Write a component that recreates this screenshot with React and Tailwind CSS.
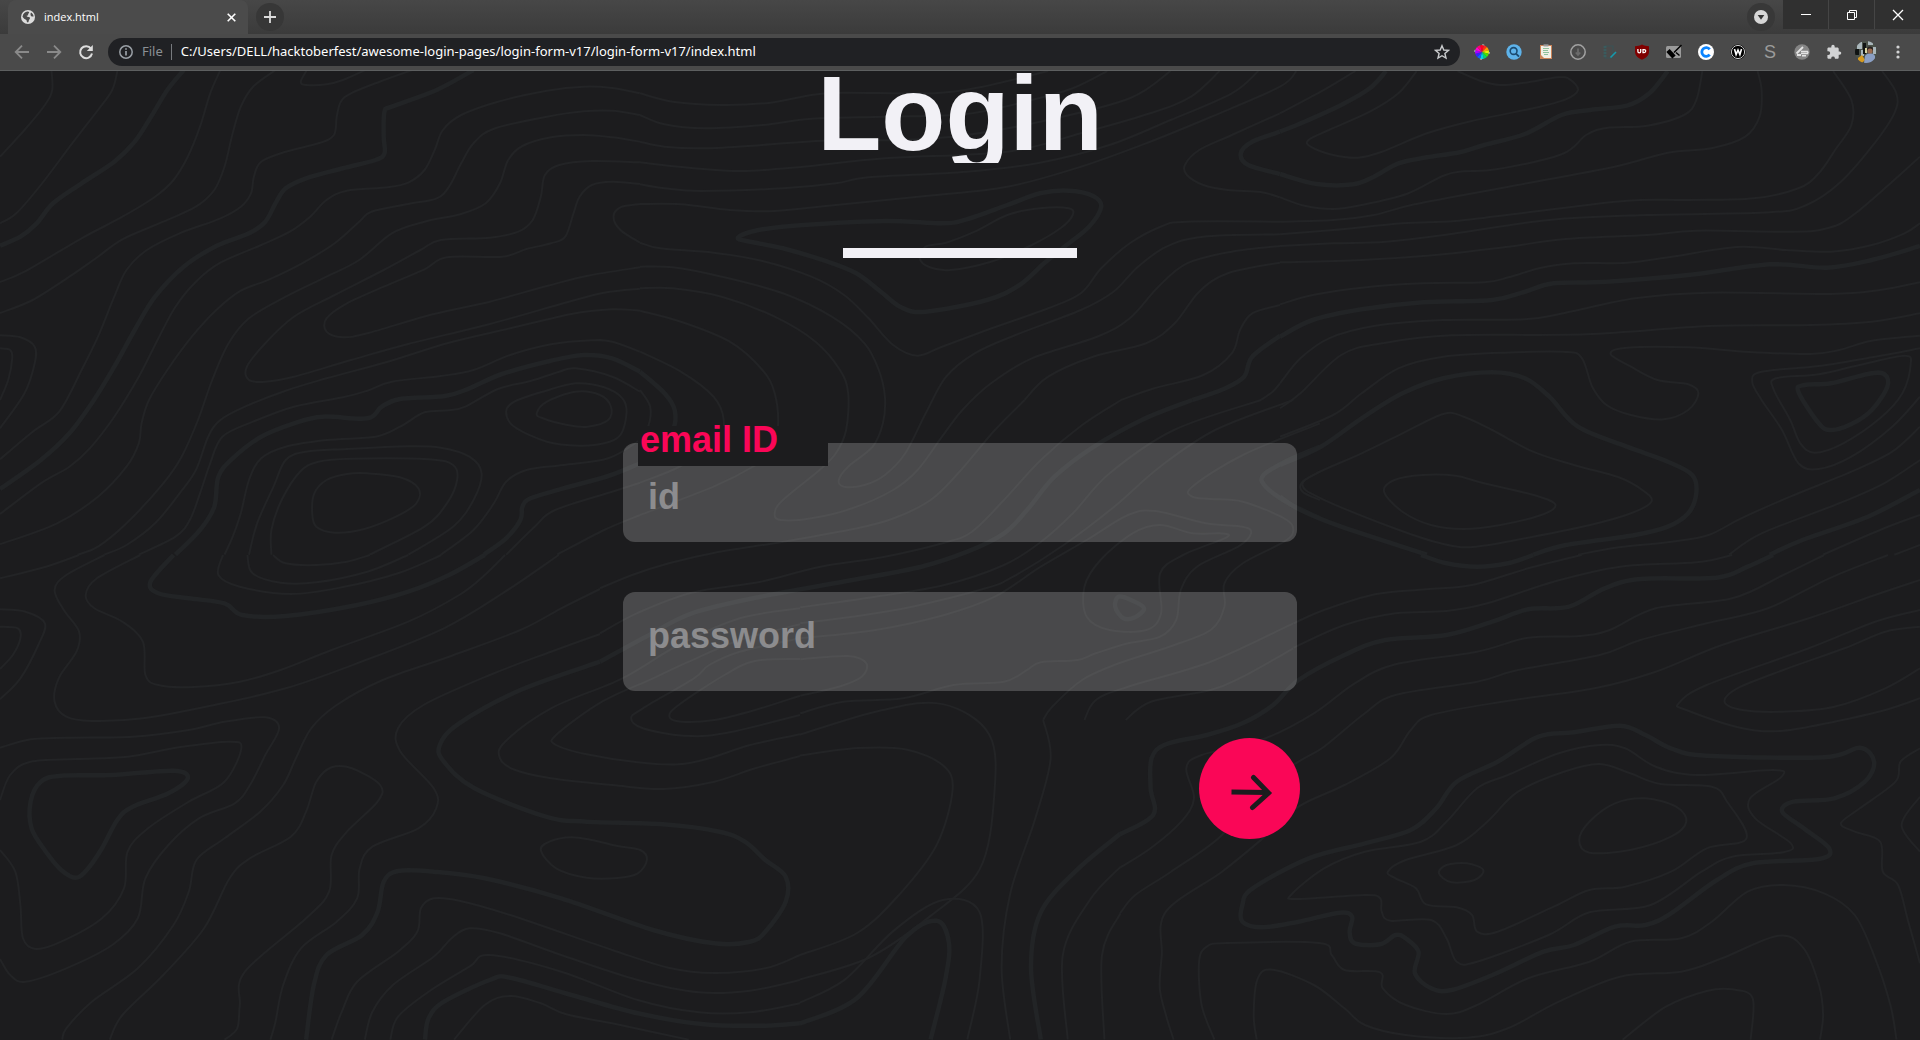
import React from "react";

/* Contour lines of the page background. Each sheet has its own grid:
   x, y is its corner on the page, sx and sy are grid units per pixel.
   A line is a list of x,y pairs; k = thick, z = closed. */
const SHEETS = [
  {
    x: 0, y: -1, sx: 2.45, sy: 3,
    lines: [
      ["", "126,0 128,60 110,105 60,180 0,260"],
      ["", "288,0 275,60 240,120 180,215 100,345 40,430 0,460"],
      ["k", "450,0 410,60 370,140 330,215 280,275 200,340 130,400 90,460 50,500 0,527"],
      ["", "540,0 515,70 490,170 460,260 425,330 380,380 300,440 200,505 60,605 0,636"],
      ["", "675,0 620,50 590,110 570,190 550,290 525,360 480,410 400,455 300,508 240,560 170,620 80,690 0,729"],
      ["", "752,0 737,35 750,45 800,43 840,30 895,0"],
      ["", "1010,0 930,35 860,70 835,95 825,140 818,195 780,220 700,245 640,275 622,320 615,370 590,410 540,445 440,490 360,540 310,600 280,680 240,800 200,900 145,1025 80,1085 0,1168"],
      ["k", "1160,0 1070,60 960,110 942,125 940,200 942,250 920,270 840,295 750,325 700,355 675,400 650,455 610,490 530,528 450,590 380,680 330,780 280,890 230,990 170,1090 100,1170 0,1257"],
      ["", "1568,70 1500,54 1430,50 1340,62 1220,95 1130,135 1085,180 1065,240 1040,300 1000,338 950,352 850,362 800,390 760,440 710,485 640,525 540,578 480,635 430,710 390,800 340,920 280,1040 220,1135 170,1190 100,1240 0,1332"],
      ["", "1568,135 1500,122 1430,124 1340,140 1210,176 1160,220 1130,280 1100,350 1070,385 1000,402 910,425 880,455 820,520 740,580 660,628 590,662 530,720 470,800 410,900 365,990 347,1060 340,1120 310,1190 240,1280 140,1360 0,1423"],
      ["", "1568,215 1500,202 1430,195 1350,202 1280,228 1245,270 1225,340 1190,400 1130,432 1040,455 960,490 880,570 800,620 700,680 610,745 560,820 520,930 485,1050 445,1160 400,1240 310,1360 240,1430 190,1454"],
      ["", "1568,277 1450,273 1370,285 1335,315 1325,380 1305,450 1270,485 1200,503 1080,510 1030,540 940,600 820,675 720,740 650,820 605,890 610,930 650,935 720,920 860,870 1000,822 1200,762 1380,700 1480,668 1568,656"],
      ["", "1568,342 1500,335 1450,345 1420,380 1405,430 1385,500 1350,520 1290,537 1230,560 1095,562 1040,598 940,650 850,700 800,745 800,785 840,802 900,790 1060,733 1200,695 1340,648 1440,617 1568,592"],
      ["", "1568,402 1520,412 1503,440 1520,480 1568,518"],
      ["", "1568,722 1500,718 1400,732 1250,775 1100,818 950,875 800,925 700,962 600,1010 540,1050 510,1100 480,1200 440,1270 380,1360 310,1425 255,1454"],
      ["", "1568,845 1500,815 1450,811 1350,823 1250,855 1160,900 1080,918 960,935 900,962 840,982 720,1010 620,1055 545,1100 515,1180 490,1270 465,1350 430,1400 340,1454"],
      ["k", "1568,905 1500,865 1430,855 1350,872 1230,912 1150,955 1090,978 980,987 935,1010 900,1045 790,1040 720,1060 640,1100 570,1165 535,1220 525,1310 490,1380 430,1454"],
      ["", "1568,965 1500,920 1410,895 1370,905 1300,933 1220,957 1140,1010 1100,1021 1040,1027 980,1070 920,1100 800,1110 700,1130 640,1165 610,1230 590,1330 570,1400 550,1454"],
      ["", "610,1454 630,1360 670,1250 700,1170 750,1145 850,1137 1000,1129 1080,1133 1150,1160 1180,1210 1160,1290 1110,1370 1000,1454"],
      ["", "665,1454 665,1380 690,1290 735,1205 780,1175 860,1166 1050,1168 1110,1185 1120,1230 1095,1300 1040,1370 905,1454"],
      ["z", "765,1330 770,1270 800,1230 850,1212 900,1210 980,1222 1025,1255 1020,1300 970,1340 890,1378 820,1388 775,1370"],
      ["z", "1240,1025 1260,995 1330,965 1410,940 1480,952 1525,985 1535,1030 1520,1095 1480,1120 1420,1127 1340,1115 1260,1070"],
      ["z", "1315,1030 1340,995 1410,965 1470,975 1497,1010 1490,1050 1440,1070 1390,1065 1330,1045"],
      ["", "1568,1110 1490,1165 1380,1185 1290,1200 1240,1235 1210,1300 1160,1380 1080,1454"],
      ["k", "1568,1180 1490,1218 1380,1255 1300,1285 1280,1310 1275,1350 1240,1405 1185,1454"],
      ["", "1568,1238 1500,1265 1360,1320 1310,1370 1240,1454"],
      ["", "1568,1335 1480,1380 1365,1454"],
      ["", "0,796 50,802 85,830 85,880 60,970 0,1075"],
      ["", "0,835 25,840 30,865 20,930 0,990"],
    ],
  },
  {
    x: 640, y: -1, sx: 2.45, sy: 3,
    lines: [
      ["", "0,70 80,95 200,105 320,98 420,75 500,68 720,70 840,50 1000,3"],
      ["", "0,135 60,163 160,175 300,165 420,146 600,140 800,132 960,90 1060,55 1145,3"],
      ["", "0,215 60,230 160,235 300,225 450,212 640,210 800,195 1000,150 1200,85 1300,3"],
      ["", "0,277 120,293 250,303 400,290 600,265 900,245 1080,190 1250,130 1350,80 1420,3"],
      ["", "0,343 60,355 150,363 350,355 480,340 560,322 800,305 980,278 1150,225 1300,150 1450,70 1515,3"],
      ["", "0,402 100,403 220,420 330,423 480,405 700,378 900,350 1080,290 1250,215 1400,140 1568,50 1608,3"],
      ["k", "1568,185 1500,215 1472,250 1490,285 1568,312"],
      ["", "1568,130 1450,195 1370,240 1335,285 1340,315 1380,345 1440,360 1520,366 1568,382"],
      ["kz", "240,503 290,480 400,465 600,453 740,460 800,448 900,405 980,370 1050,362 1110,378 1130,410 1100,470 1040,530 990,580 930,645 850,690 700,725 640,712 590,665 530,610 460,575 350,535 270,515"],
      ["z", "685,565 700,530 750,518 820,485 900,435 980,415 1050,415 1060,435 1030,475 960,525 860,575 760,600 710,592"],
      ["", "0,518 50,535 180,548 300,573 420,620 500,675 560,745 620,825 680,857 740,830 850,780 1000,715 1080,670 1130,595 1200,520 1280,468 1340,455 1568,455"],
      ["", "0,590 80,592 200,620 350,670 470,740 550,820 585,900 600,980 595,1060 570,1130 510,1190 487,1230 500,1250 550,1245 600,1215 650,1150 700,1030 750,920 820,850 920,795 1080,720 1160,665 1220,590 1290,530 1380,500 1568,493"],
      ["", "0,655 80,655 200,680 330,740 430,815 490,900 510,970 505,1080 480,1150 440,1200 350,1290 330,1330 345,1350 420,1345 520,1315 620,1260 680,1200 740,1100 790,1020 860,940 960,865 1120,800 1200,745 1270,650 1340,580 1450,545 1568,528"],
      ["", "0,722 100,755 220,815 300,900 330,970 338,1070 320,1150 280,1188 180,1250 0,1335"],
      ["", "0,845 100,905 180,980 205,1050 190,1110 100,1188 0,1238"],
      ["k", "0,905 60,970 85,1020 80,1080 40,1130 0,1180"],
      ["", "0,960 25,1010 20,1070 0,1110"],
      ["", "1568,578 1440,610 1370,665 1310,760 1240,820 1110,860 1000,920 942,990"],
      ["", "1568,705 1500,730 1470,780 1450,850 1380,915 1260,955 1178,990"],
      ["k", "1568,797 1500,860 1480,920 1430,957 1353,990"],
      ["", "1568,940 1550,965 1521,990"],
    ],
  },
  {
    x: 600, y: 329, sx: 2.178, sy: 3,
    lines: [
      ["", "925,0 860,90 780,220 720,300 640,355 560,385 400,425 250,458 150,490 70,525 0,565"],
      ["", "1135,0 1050,75 960,180 880,300 810,395 750,428 620,470 480,500 350,545 200,578 80,640 0,700"],
      ["k", "1290,0 1180,60 1070,145 990,230 930,330 880,400 800,455 700,500 550,540 350,590 200,640 100,710 0,785"],
      ["", "1440,0 1250,90 1110,220 1030,340 960,426 880,495 750,555 600,590 436,622"],
      ["", "1510,0 1340,90 1220,200 1120,320 1010,435 900,530 840,565 680,620 550,650 436,670"],
      ["", "1568,70 1400,165 1290,260 1290,290 1330,297 1400,305 1490,355 1510,390 1490,425 1400,490 1360,550 1360,620 1330,690 1240,740 1130,790 1050,840 985,920 965,960"],
      ["", "436,715 600,690 750,645 860,590 960,500 1060,420 1150,345 1210,333 1320,370 1400,380 1418,400 1390,440 1300,500 1265,570 1255,660 1220,710 1150,730 1080,760 1040,780 960,787 930,810 880,845 770,855 660,895 530,905 436,940"],
      ["z", "1160,400 1220,375 1290,400 1350,400 1365,412 1270,465 1220,520 1222,640 1190,690 1110,690 1060,650 1055,560 1090,480"],
      ["kz", "1122,620 1130,590 1160,602 1185,625 1165,652 1140,655"],
      ["k", "1568,140 1500,180 1445,225 1450,260 1500,310 1568,355"],
      ["", "1568,215 1530,245 1530,275 1568,300"],
      ["", "436,778 540,768 580,790 570,830 520,860 436,887"],
      ["", "1510,670 1330,785 1150,860 1080,900 1055,960"],
      ["", "1510,745 1400,830 1330,870 1200,905 1145,960"],
    ],
  },
  {
    x: 1280, y: -1, sx: 2.45, sy: 3,
    lines: [
      ["", "0,130 100,65 185,3"],
      ["k", "0,185 60,155 150,105 220,55 260,3"],
      ["", "335,3 290,70 220,125 120,180 70,210 75,230 130,255 190,263 250,245 360,190 470,153 620,115 700,88 730,60 710,28 680,22 600,38 540,45 490,32 435,3"],
      ["k", "0,312 90,342 180,343 230,320 290,280 360,262 440,247 500,225 600,192 690,135 760,120 850,107 905,70 950,3"],
      ["", "0,382 60,407 130,417 200,405 310,372 400,317 450,304 530,298 690,253 750,195 800,174 900,167 990,135 1020,90 1035,3"],
      ["", "0,455 130,450 230,435 330,403 560,350 820,290 950,248 1060,234 1140,200 1175,140 1180,60 1170,3"],
      ["", "0,493 130,480 300,460 430,453 600,428 850,392 1000,390 1160,385 1270,355 1320,310 1360,240 1400,165 1400,90 1355,3"],
      ["", "0,528 130,520 260,515 420,492 660,450 900,435 1200,427 1290,405 1370,340 1450,230 1505,130 1510,70 1475,3"],
      ["", "0,577 200,570 400,553 560,530 700,507 900,495 1020,482 1250,485 1340,475 1410,430 1568,260"],
      ["", "0,703 80,675 200,653 350,640 500,637 560,622 640,593 720,580 850,578 960,560 1120,531 1240,540 1350,545 1450,525 1530,490 1568,460"],
      ["k", "0,800 80,750 200,718 350,697 520,690 600,665 670,640 800,635 1000,615 1200,583 1340,593 1450,570 1568,528"],
      ["", "0,940 50,865 120,805 230,768 400,750 600,748 700,728 870,685 1050,668 1350,672 1470,660 1568,637"],
      ["", "0,1015 50,970 150,855 250,820 420,796 750,793 1050,768 1300,765 1450,755 1568,730"],
      ["", "0,1100 130,1035 200,970 290,895 400,860 550,848 700,846 740,865 765,950 800,1005 860,1035 940,1048 1000,1020 1025,970 1000,943 925,930 860,890 810,852 850,833 1000,832 1150,846 1300,852 1370,840 1450,812 1568,797"],
      ["k", "0,1185 100,1130 200,1045 300,970 400,925 520,907 600,925 660,980 730,1070 850,1130 950,1175 1010,1215 1020,1270 1000,1330 950,1370 870,1395 700,1425 620,1454"],
      ["k", "0,1280 50,1320 150,1370 360,1454"],
      ["z", "55,1245 90,1210 200,1150 300,1090 400,1032 450,1040 520,1080 620,1145 720,1185 830,1222 890,1262 910,1295 860,1330 760,1365 620,1400 480,1430 400,1422 280,1375 100,1285"],
      ["z", "255,1265 280,1230 350,1215 430,1217 500,1240 630,1278 675,1305 640,1335 540,1365 450,1377 370,1365 300,1325"],
      ["", "1568,980 1500,1070 1400,1160 1320,1197 1270,1180 1230,1080 1180,990 1157,935 1180,905 1320,888 1450,862 1568,835"],
      ["z", "1215,925 1320,913 1420,885 1530,857 1545,885 1525,970 1470,1045 1380,1120 1310,1148 1275,1120 1250,1050 1210,960"],
      ["kz", "1270,965 1285,945 1350,940 1440,912 1480,912 1488,950 1450,1020 1400,1062 1350,1080 1320,1060"],
      ["", "1568,1070 1500,1145 1400,1205 1250,1280 1130,1345 1050,1395 960,1415 830,1432 730,1454"],
      ["", "1568,1170 1480,1240 1370,1300 1180,1390 1100,1454"],
      ["k", "1568,1260 1440,1340 1280,1410 1200,1454"],
      ["", "1568,1335 1480,1375 1330,1454"],
      ["", "1568,1425 1505,1454"],
    ],
  },
  {
    x: 0, y: 484, sx: 1.96, sy: 3,
    lines: [
      ["", "0,70 90,35 155,0"],
      ["", "205,0 130,60 107,105 125,165 155,230 150,290 115,370 107,440 130,485 180,498 280,490 420,450 560,400 700,325 870,220 990,110 1095,0"],
      ["", "275,0 190,70 168,120 185,160 240,200 280,260 285,360 310,390 380,396 470,380 550,345 650,285 800,200 900,120 950,60 990,0"],
      ["k", "340,0 295,80 310,115 370,130 440,145 475,180 560,183 700,150 800,110 880,60 950,0"],
      ["", "437,0 428,60 470,95 570,117 670,97 780,55 865,0"],
      ["", "485,0 495,55 550,83 620,82 720,50 800,0"],
      ["", "535,0 560,25 620,30 680,20 725,0"],
      ["", "0,163 50,170 88,205 75,270 40,370 0,433"],
      ["", "0,215 35,220 40,250 25,300 0,342"],
      ["", "1176,102 1100,160 1020,225 880,305 750,375 660,450 610,520 580,610 555,690 510,770 440,850 385,915 370,1010 340,1110 270,1240 180,1340 130,1420 122,1454"],
      ["", "0,578 60,553 130,548 260,545 370,525 440,500 520,487 547,520 520,600 490,690 460,745 390,790 330,870 285,970 270,1090 220,1170 130,1240 50,1280 20,1260 0,1212"],
      ["", "0,735 20,660 60,620 150,612 250,605 350,577 450,560 473,580 440,680 370,740 290,820 250,890 243,1000 200,1090 120,1160 70,1182 45,1150 40,1050 30,950 0,885"],
      ["kz", "60,740 80,680 120,662 220,660 340,647 368,670 330,715 260,755 230,795 200,880 170,945 148,968 120,945 90,890 62,820"],
      ["", "215,1454 240,1380 320,1260 400,1120 450,970 490,910 570,845 600,770 620,680 650,637 690,640 745,690 740,740 680,830 650,900 645,1010 600,1090 480,1250 470,1350 465,1420 440,1454"],
      ["", "1176,237 1080,290 960,360 830,450 780,520 785,590 850,700 855,760 820,820 730,875 705,940 700,1030 660,1100 590,1180 555,1290 540,1400 530,1454"],
      ["k", "1176,320 1020,405 900,505 862,570 870,620 930,700 1070,785 1150,800 1300,808 1410,830 1460,860 1500,915 1540,965 1540,1040 1500,1130 1470,1160 1400,1165 1280,1125 1100,1030 950,970 850,950 780,948 752,980 740,1070 710,1140 640,1200 615,1290 600,1454"],
      ["", "1568,160 1450,190 1330,270 1220,370 1080,460 990,560 980,610 1010,645 1080,670 1200,690 1300,702 1400,680 1480,640 1568,603"],
      ["", "1568,208 1450,255 1350,320 1280,370 1180,440 1090,540 1090,570 1150,598 1250,622 1330,628 1390,610 1470,570 1568,538"],
      ["", "1568,250 1450,290 1390,330 1360,370 1260,460 1237,490 1260,520 1340,542 1420,535 1568,480"],
      ["", "1568,312 1480,318 1420,360 1330,450 1312,485 1335,500 1400,495 1480,465 1568,422"],
      ["z", "1060,885 1080,858 1120,847 1160,855 1210,873 1255,885 1268,915 1250,955 1210,969 1150,968 1090,940"],
      ["", "1568,1200 1500,1240 1400,1254 1310,1238 1200,1185 1000,1080 900,1037 850,1030 825,1060 818,1130 780,1190 700,1280 670,1370 650,1454"],
      ["", "1568,1275 1470,1307 1370,1312 1250,1275 1100,1200 980,1135 920,1120 885,1150 850,1205 770,1290 730,1370 715,1454"],
      ["", "1568,1345 1470,1372 1370,1372 1250,1335 1100,1250 960,1200 920,1235 840,1310 780,1385 765,1454"],
      ["k", "1568,1405 1500,1412 1380,1408 1250,1375 1120,1320 1000,1268 960,1275 870,1340 840,1390 833,1454"],
      ["", "890,1454 950,1350 1000,1323 1060,1345 1110,1378 1200,1405 1350,1454"],
    ],
  },
  {
    x: 0, y: -71, sx: 0.8167, sy: 0.8167,
    lines: [
      ["", "653,617 700,611 740,612 770,625 778,645 765,690 735,730 700,762 653,780"],
      ["", "653,600 720,580 770,575 808,600 812,650 800,710 760,748 710,782 653,800"],
      ["k", "653,836 700,815 740,765 765,752 775,770 772,800 760,849"],
      ["", "653,819 690,800 730,760 770,735 800,745 800,800 790,849"],
      ["", "852,588 858,620 845,670 825,730 818,790 825,849"],
      ["k", "915,681 880,710 850,745 842,790 850,849"],
      ["", "915,708 890,735 868,780 872,849"],
      ["", "915,746 900,780 902,849"],
    ],
  },
  {
    x: 1120, y: 484, sx: 1.96, sy: 3,
    lines: [
      ["", "905,0 800,40 690,90 600,103 500,118 400,165 340,205"],
      ["", "1200,0 1130,22 980,35 850,80 720,145 640,168 540,175 440,210 340,278"],
      ["k", "590,0 640,25 700,35 760,25 810,0"],
      ["k", "1280,0 1230,35 1170,68 1020,72 950,100 880,155 800,163 730,200 640,240 520,255 440,300 350,375 300,450 240,505 170,540 90,568 62,610 60,700 65,780 0,838"],
      ["", "1380,0 1300,60 1200,130 1050,160 960,225 900,243 800,248 700,290 540,328 460,385 380,475 280,553 160,600 130,640 145,730 120,800 60,880 0,938"],
      ["", "1505,0 1390,70 1270,160 1150,205 1020,255 940,300 780,345 700,380 540,420 480,475 400,575 350,620 250,720 200,840 100,950 30,1020 0,1075"],
      ["", "1568,75 1480,120 1350,190 1180,270 1050,350 930,400 750,440 610,480 570,525 530,610 440,690 350,755 280,850 200,950 90,1070 82,1200 78,1300 90,1380 105,1454"],
      ["", "1568,165 1480,200 1350,280 1150,390 1095,445 1110,465 1220,520 1300,527 1400,500 1500,465 1568,430"],
      ["", "1568,215 1500,230 1420,280 1300,345 1210,400 1185,440 1220,465 1300,470 1400,455 1500,400 1568,340"],
      ["kz", "240,1050 260,1000 370,910 480,865 570,825 620,760 660,680 740,620 820,545 890,532 980,512 1030,540 1080,580 1150,602 1380,607 1450,578 1478,620 1460,680 1400,730 1320,740 1298,770 1340,820 1390,880 1370,912 1240,925 1170,975 1080,1075 1030,1110 970,1115 890,1170 830,1190 730,1260 650,1305 610,1300 578,1255 585,1190 560,1150 540,1140 510,1168 460,1165 450,1130 455,1085 430,1073 350,1100 280,1117 240,1100"],
      ["z", "335,1020 400,940 480,890 590,860 640,800 700,700 760,660 860,595 940,570 990,580 1050,635 1130,660 1280,645 1297,665 1235,730 1245,790 1315,865 1300,892 1200,905 1140,950 1040,1050 920,1072 840,1140 700,1220 660,1220 640,1150 610,1095 530,1097 513,1070 510,1030 480,1020 350,1032"],
      ["z", "525,950 560,915 660,870 720,800 780,710 870,650 940,627 1000,655 1060,687 1160,695 1190,740 1228,850 1150,880 1080,950 990,995 920,1005 850,1055 740,1130 700,1130 690,1080 660,1057 600,1048 580,1000 540,970"],
      ["z", "900,855 920,800 970,745 1030,730 1090,755 1110,800 1080,845 1000,885 920,893"],
      ["z", "625,955 640,930 680,925 712,945 695,975 650,982"],
      ["", "185,1454 160,1350 155,1220 170,1175 210,1164 390,1164 415,1200 440,1245 510,1252 515,1300 560,1350 640,1377 700,1350 800,1270 920,1220 1000,1160 1100,1150 1160,1100 1230,1010 1300,990 1380,1015 1440,1080 1480,1210 1510,1350 1522,1454"],
      ["", "268,1454 262,1380 270,1270 300,1244 380,1290 440,1360 480,1410 560,1440 680,1448 760,1420 860,1340 980,1265 1100,1250 1180,1210 1290,1142 1340,1180 1370,1290 1378,1380 1372,1454"],
      ["", "985,1454 1070,1355 1150,1308 1200,1303 1240,1330 1236,1454"],
      ["", "1568,580 1530,620 1520,680 1450,760 1413,805 1440,830 1490,860 1495,950 1525,990 1545,1100 1568,1225"],
      ["", "1568,725 1532,810 1568,890"],
    ],
  },
];

/* Smooth curve through the points (Catmull-Rom as cubic Béziers). */
function curve(sheet, list, closed) {
  const p = list.split(" ").map((s) => {
    const [a, b] = s.split(",").map(Number);
    return [sheet.x + a / sheet.sx, sheet.y + b / sheet.sy];
  });
  const n = p.length;
  const at = (i) => (closed ? p[(i + n) % n] : p[Math.max(0, Math.min(n - 1, i))]);
  let d = `M${p[0][0].toFixed(1)} ${p[0][1].toFixed(1)}`;
  for (let i = 0; i < (closed ? n : n - 1); i++) {
    const a = at(i - 1), b = at(i), c = at(i + 1), e = at(i + 2);
    const v = [b[0] + (c[0] - a[0]) / 6, b[1] + (c[1] - a[1]) / 6, c[0] - (e[0] - b[0]) / 6, c[1] - (e[1] - b[1]) / 6, c[0], c[1]];
    d += "C" + v.map((t) => t.toFixed(1)).join(" ");
  }
  return closed ? d + "Z" : d;
}

function Contours() {
  return (
    <svg className="absolute inset-0 h-full w-full" viewBox="0 0 1920 969" preserveAspectRatio="xMidYMin slice" fill="none" aria-hidden="true">
      {SHEETS.flatMap((s, i) =>
        s.lines.map(([kind, pts], j) => (
          <path key={`${i}-${j}`} d={curve(s, pts, kind.includes("z"))} stroke={kind.includes("k") ? "#222426" : "#232426"} strokeWidth={kind.includes("k") ? 4.5 : 2} />
        ))
      )}
    </svg>
  );
}

function Ext({ label, children }) {
  return (
    <button aria-label={label} className="flex h-7 w-8 items-center justify-center">
      <svg className="size-4" viewBox="0 0 16 16" fill="none" aria-hidden="true">{children}</svg>
    </button>
  );
}

const WHEEL = ["#ff2a1a", "#ff9a00", "#e8f000", "#4be000", "#00d86a", "#00d0e8", "#0a62ff", "#3a1cff", "#a800ff", "#ff00d4", "#ff0070", "#ff0020"];

function Extensions() {
  return (
    <>
      <Ext label="Colour picker">
        {WHEEL.map((c, i) => {
          const a = ((i * 30 - 75) * Math.PI) / 180, b = a + Math.PI / 6;
          return <path key={c} fill={c} d={`M8 8L${8 + 7 * Math.cos(a)} ${8 + 7 * Math.sin(a)}A7 7 0 0 1 ${8 + 7 * Math.cos(b)} ${8 + 7 * Math.sin(b)}Z`} />;
        })}
        <circle cx="8" cy="8" r="7.3" stroke="#bbb" strokeWidth="1" strokeDasharray="2 9.5" />
      </Ext>
      <Ext label="Search tool">
        <circle cx="8" cy="8" r="7.7" fill="#5eb3ea" />
        <circle cx="7.6" cy="7" r="3.4" stroke="#1c4b70" strokeWidth="1.6" />
        <path d="M10 9.6l3 3" stroke="#1c4b70" strokeWidth="2" />
      </Ext>
      <Ext label="Clipboard">
        <path d="M2 1h12v14H2z" fill="#c98257" />
        <path d="M3 2h10v12H6l-3-3z" fill="#f1efe6" />
        <path d="M5.500 .3h5v2.200h-5z" fill="#999" />
        <path d="M5 4.500h6M5 6.500h5M5 8.500h6M6 10.500h4" stroke="#8fc19d" />
      </Ext>
      <Ext label="Downloader">
        <circle cx="8" cy="8" r="7.2" stroke="#a2a2a2" strokeWidth="1.5" />
        <path d="M8 4.500v6M5.800 8.500L8 11l2.200-2.500" stroke="#6b6b6b" strokeWidth="1.800" />
      </Ext>
      <Ext label="Notes">
        <path d="M3 2h8v12H3z" stroke="#3b5355" strokeWidth="1.2" />
        <path d="M1.500 3h3M1.500 6h3M1.500 9h3M1.500 12h3" stroke="#35686d" />
        <path d="M8.500 13.500L14 8" stroke="#159aad" strokeWidth="1.6" />
      </Ext>
      <Ext label="Shield">
        <path d="M8 .5c2 1.200 4.500 1.700 7 1.700v5.300c0 4-3 6.500-7 8.200-4-1.700-7-4.200-7-8.200V2.200C3.500 2.200 6 1.700 8 .500z" fill="#800000" />
        <path d="M3.900 5v2.400a1.400 1.400 0 0 0 2.800 0V5M9 5.600v3h1.200a1.500 1.500 0 0 0 0-3z" stroke="#fff" strokeWidth="1.300" />
      </Ext>
      <Ext label="Cleaner">
        <rect x="0" y="2" width="15" height="12" rx="1.500" fill="#9a9a9a" />
        <path d="M2 6.500l6 6.500" stroke="#000" strokeWidth="4.500" />
        <path d="M8 8.500L15.500 1M10 8.500l3.500 3" stroke="#000" strokeWidth="1.500" />
      </Ext>
      <Ext label="Clockify">
        <circle cx="8" cy="8" r="8" fill="#fff" />
        <path d="M11.700 5.300A4.400 4.400 0 1 0 11.700 10.700" stroke="#0a84ff" strokeWidth="2.800" />
      </Ext>
      <Ext label="Wiki">
        <circle cx="8" cy="8" r="7.500" fill="#000" />
        <circle cx="8" cy="8" r="6.600" stroke="#c9c9c9" strokeWidth="1" />
        <path d="M4.500 5l1.600 5.500L8 6l1.900 4.500L11.500 5" stroke="#fff" strokeWidth="1.600" />
      </Ext>
      <button aria-label="S extension" className="flex h-7 w-8 items-center justify-center font-['Liberation_Sans'] text-lg leading-none text-[#9b9b9b]">S</button>
      <Ext label="Highlighter">
        <circle cx="8" cy="8" r="7.700" fill="#858585" />
        <path d="M2.500 9.500L9 3M3 11h4" stroke="#e4e4e4" strokeWidth="1.800" />
        <path d="M7 7.500h6.500a1.500 1.500 0 0 1 0 2M7 9.500h7M8 11.800h4" stroke="#e4e4e4" strokeWidth="1.400" />
      </Ext>
      <Ext label="Extensions">
        <path d="M13.600 7.400h-.9V4.900c0-.8-.6-1.400-1.400-1.400H8.700v-1a1.700 1.700 0 0 0-3.400 0v1H2.700c-.8 0-1.300.6-1.300 1.400v2.300h.9a1.900 1.900 0 0 1 0 3.800h-.9v2.400c0 .8.600 1.400 1.400 1.400h2.400v-.9a1.900 1.900 0 0 1 3.700 0v.9h2.400c.8 0 1.400-.6 1.400-1.400v-2.600h.9a1.700 1.700 0 0 0 0-3.400z" fill="#d2d3d4" />
      </Ext>
      <button aria-label="Profile" className="flex h-7 w-8 items-center justify-center">
        <svg className="size-[22px]" viewBox="0 0 22 22" aria-hidden="true">
          <clipPath id="face"><circle cx="11" cy="11" r="11" /></clipPath>
          <g clipPath="url(#face)">
            <path fill="#4b524a" d="M0 0h22v22H0z" />
            <path fill="#a9b6bb" d="M2 1h5v7H2zM13 0h5v4h-5zM6 9h3v6H6zM18 6h3v7h-3z" />
            <path fill="#101312" d="M8 2h3v11H8zM0 8h4v6H0z" />
            <path fill="#d9d5a0" d="M10 7h2v5h-2z" />
            <path fill="#d69a1f" d="M3 17l4-3 3 5-3 3H3z" />
            <path fill="#8b9fc4" d="M10 15c2-3 8-4 10 0v7H9z" />
            <circle cx="15" cy="8.500" r="3" fill="#2b2320" />
            <circle cx="15" cy="10" r="2.600" fill="#9a6b50" />
          </g>
        </svg>
      </button>
      <button aria-label="Menu" className="flex h-7 w-8 items-center justify-center">
        <svg className="size-4" viewBox="0 0 16 16" fill="#d2d3d4" aria-hidden="true">
          <circle cx="8" cy="3" r="1.600" /><circle cx="8" cy="8" r="1.600" /><circle cx="8" cy="13" r="1.600" />
        </svg>
      </button>
    </>
  );
}

function WinButton({ label, children }) {
  return (
    <button aria-label={label} className="flex h-[29px] w-[45px] items-center justify-center bg-[#303030]">
      <svg className="size-3" viewBox="0 0 12 12" fill="none" stroke="#fff" aria-hidden="true">{children}</svg>
    </button>
  );
}

function Browser() {
  return (
    <header className="relative border-b border-[#5d5f60] bg-[#4a4a4a] font-['Open_Sans',sans-serif]">
      <div className="flex h-[34px] items-start justify-between bg-linear-to-b from-[#474747] to-[#3b3b3b] pl-2">
        <div className="flex items-center">
          <div className="flex h-[34px] w-60 items-center rounded-t-lg bg-[#4b4b4b] pr-[9px] pl-[13px]">
            <svg className="size-[14px]" viewBox="0 0 14 14" aria-hidden="true">
              <circle cx="7" cy="7" r="7" fill="#dcdcdc" />
              <path d="M6.500 1.500c2 0 2 1.500 1 2s.5 1.800-1.200 2C5 5.600 5.800 7 7.500 7s2 1.500 1 2.200-.4 2.300-1.500 3.300c-1.800-.3-.8-2.300-2-2.800S2.500 8.500 1.500 6.800C2 3.500 4 1.700 6.500 1.500zM10 2.500c1.500.8 2.500 2.300 2.600 4-1.600.3-2.800-.2-3-1.500S9.500 3.500 10 2.500z" fill="#4b4b4b" />
            </svg>
            <span className="ml-[9px] flex-1 text-[11px] text-white">index.html</span>
            <button aria-label="Close tab" className="flex size-4 items-center justify-center">
              <svg className="size-[9px]" viewBox="0 0 9 9" stroke="#fff" strokeWidth="1.600" aria-hidden="true"><path d="M.7.7l7.600 7.600M8.300.7L.7 8.300" /></svg>
            </button>
          </div>
          <button aria-label="New tab" className="ml-2 flex size-7 items-center justify-center rounded-full bg-[#373737]">
            <svg className="size-3" viewBox="0 0 12 12" stroke="#dcdcdc" strokeWidth="1.800" aria-hidden="true"><path d="M6 0v12M0 6h12" /></svg>
          </button>
        </div>
        <div className="flex items-start">
          <button aria-label="Search tabs" className="mt-[3px] mr-2 flex size-7 items-center justify-center rounded-full bg-[#383838]">
            <svg className="size-[14px]" viewBox="0 0 14 14" aria-hidden="true">
              <circle cx="7" cy="7" r="7" fill="#d6d6d6" /><path d="M3.700 5h6.600L7 9.700z" fill="#333" />
            </svg>
          </button>
          <div className="flex gap-px bg-[#454545]">
            <WinButton label="Minimize"><path d="M1 5.500h10" /></WinButton>
            <WinButton label="Restore"><path d="M1.500 3.500h7v7h-7zM3.500 3.500v-2h7v7h-2" /></WinButton>
            <WinButton label="Close"><path d="M1 1l10 10M11 1L1 11" strokeWidth="1.300" /></WinButton>
          </div>
        </div>
      </div>
      <div className="flex h-9 items-center pr-[6px] pl-[14px]">
        <button aria-label="Back" className="flex w-8 items-center text-[#8a8a8a]">
          <svg className="size-4" viewBox="0 0 16 16" fill="none" stroke="currentColor" strokeWidth="1.800" aria-hidden="true"><path d="M15 8H2M8 1.700L1.700 8 8 14.300" /></svg>
        </button>
        <button aria-label="Forward" className="flex w-8 items-center text-[#8a8a8a]">
          <svg className="size-4" viewBox="0 0 16 16" fill="none" stroke="currentColor" strokeWidth="1.800" aria-hidden="true"><path d="M1 8h13M8 1.700L14.300 8 8 14.300" /></svg>
        </button>
        <button aria-label="Reload" className="flex w-[30px] items-center text-[#dedede]">
          <svg className="size-4" viewBox="0 0 16 16" fill="none" aria-hidden="true">
            <path d="M13 4.600A6 6 0 1 0 14 9.500" stroke="currentColor" strokeWidth="2" /><path d="M14.800 1v6H8.800z" fill="currentColor" />
          </svg>
        </button>
        <div className="mr-[6px] flex h-7 flex-1 items-center rounded-full bg-[#202124] pr-[10px] pl-[11px] font-['Noto_Sans',sans-serif] text-[13px]">
          <svg className="size-[14px]" viewBox="0 0 14 14" fill="none" stroke="#9aa0a6" strokeWidth="1.500" aria-hidden="true"><circle cx="7" cy="7" r="6.200" /><path d="M7 6v4.500M7 3.200v1.600" strokeWidth="1.700" /></svg>
          <span className="ml-[9px] text-[#8b9095]">File</span>
          <span className="mr-[9px] ml-2 h-4 w-px bg-[#777a7e]" />
          <input aria-label="Address" className="min-w-0 flex-1 bg-transparent text-white outline-none" defaultValue="C:/Users/DELL/hacktoberfest/awesome-login-pages/login-form-v17/login-form-v17/index.html" />
          <button aria-label="Bookmark">
            <svg className="size-4" viewBox="0 0 16 16" fill="none" stroke="#c9cbcd" strokeWidth="1.400" aria-hidden="true"><path d="M8 1.700l1.800 4.300 4.700.4-3.600 3.100 1.100 4.600L8 11.700l-4 2.400 1.100-4.600L1.500 6.400 6.200 6z" /></svg>
          </button>
        </div>
        <Extensions />
      </div>
    </header>
  );
}

const FIELD = "block h-[99px] w-full rounded-xl bg-white/20 px-[25px] text-4xl font-bold text-white outline-none placeholder:text-[#8c8c8e]";

export default function App() {
  return (
    <div className="flex min-h-screen flex-col bg-[#1c1c1e] font-['Liberation_Sans',Arial,sans-serif]">
      <Browser />
      <main className="relative flex-1 overflow-hidden">
        <Contours />
        <div className="relative mx-auto flex w-full max-w-[680px] flex-col">
          <h1 className="h-[92px] overflow-hidden text-center text-[105px] leading-[86px] font-bold text-[#f2f1f6]">Login</h1>
          <div className="mx-auto mt-[85px] h-[10px] w-[234px] bg-[#f2f1f6]" />
          <form className="mt-[185px]" onSubmit={(e) => e.preventDefault()}>
            <div className="relative px-[3px]">
              <label htmlFor="email" className="absolute -top-[17px] left-[18px] h-10 w-[190px] bg-[#1c1c1e] pl-[2px] text-4xl leading-[27px] font-bold text-[#fa0657]">email ID</label>
              <input id="email" type="text" placeholder="id" className={`${FIELD} pt-2`} />
            </div>
            <div className="mt-[50px] px-[3px]">
              <input type="password" aria-label="password" placeholder="password" className={`${FIELD} pb-3`} />
            </div>
            <div className="mt-[47px] flex justify-end">
              <button type="submit" aria-label="Log in" className="flex size-[101px] items-center justify-center rounded-full bg-[#fa0657]">
                <svg className="size-[101px]" viewBox="0 0 101 101" fill="none" stroke="#1c1c1e" strokeWidth="5" aria-hidden="true">
                  <path d="M32.500 54l36 .5" /><path d="M54.500 39.500L69.500 55 53.500 69.500" strokeLinecap="round" strokeLinejoin="miter" />
                </svg>
              </button>
            </div>
          </form>
        </div>
      </main>
    </div>
  );
}
